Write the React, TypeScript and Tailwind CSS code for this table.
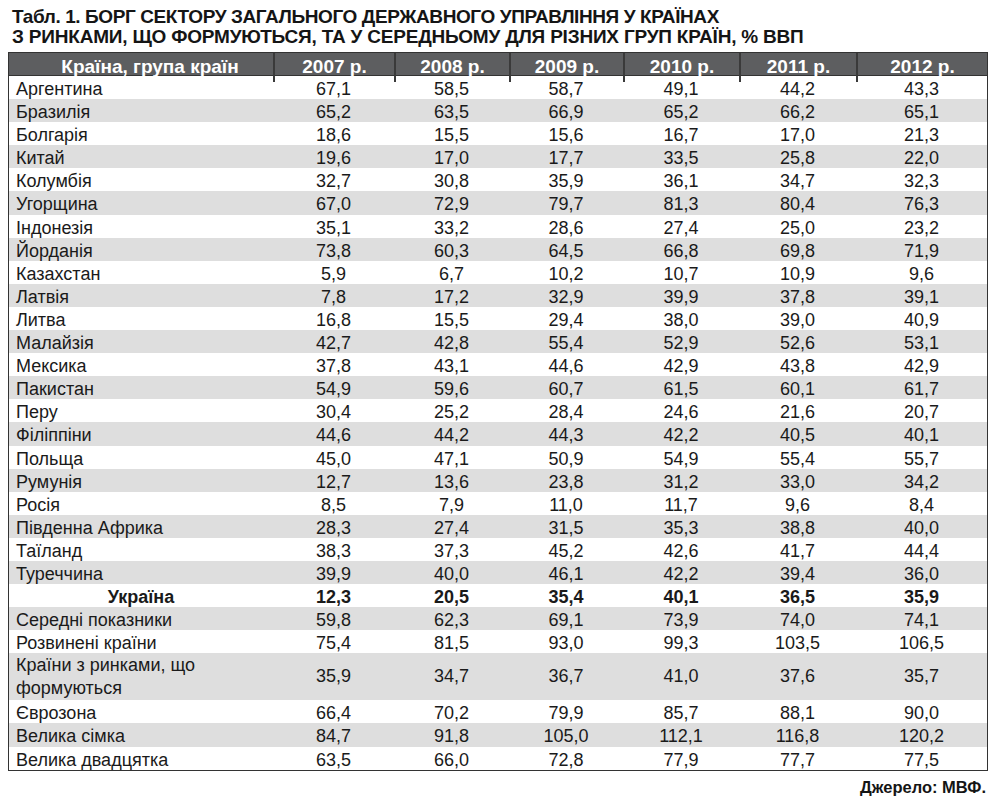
import React from "react";

type Row = { name: string; vals: string[]; bold?: boolean; tall?: boolean };

const rows: Row[] = [
  { name: "Аргентина", vals: ["67,1", "58,5", "58,7", "49,1", "44,2", "43,3"] },
  { name: "Бразилія", vals: ["65,2", "63,5", "66,9", "65,2", "66,2", "65,1"] },
  { name: "Болгарія", vals: ["18,6", "15,5", "15,6", "16,7", "17,0", "21,3"] },
  { name: "Китай", vals: ["19,6", "17,0", "17,7", "33,5", "25,8", "22,0"] },
  { name: "Колумбія", vals: ["32,7", "30,8", "35,9", "36,1", "34,7", "32,3"] },
  { name: "Угорщина", vals: ["67,0", "72,9", "79,7", "81,3", "80,4", "76,3"] },
  { name: "Індонезія", vals: ["35,1", "33,2", "28,6", "27,4", "25,0", "23,2"] },
  { name: "Йорданія", vals: ["73,8", "60,3", "64,5", "66,8", "69,8", "71,9"] },
  { name: "Казахстан", vals: ["5,9", "6,7", "10,2", "10,7", "10,9", "9,6"] },
  { name: "Латвія", vals: ["7,8", "17,2", "32,9", "39,9", "37,8", "39,1"] },
  { name: "Литва", vals: ["16,8", "15,5", "29,4", "38,0", "39,0", "40,9"] },
  { name: "Малайзія", vals: ["42,7", "42,8", "55,4", "52,9", "52,6", "53,1"] },
  { name: "Мексика", vals: ["37,8", "43,1", "44,6", "42,9", "43,8", "42,9"] },
  { name: "Пакистан", vals: ["54,9", "59,6", "60,7", "61,5", "60,1", "61,7"] },
  { name: "Перу", vals: ["30,4", "25,2", "28,4", "24,6", "21,6", "20,7"] },
  { name: "Філіппіни", vals: ["44,6", "44,2", "44,3", "42,2", "40,5", "40,1"] },
  { name: "Польща", vals: ["45,0", "47,1", "50,9", "54,9", "55,4", "55,7"] },
  { name: "Румунія", vals: ["12,7", "13,6", "23,8", "31,2", "33,0", "34,2"] },
  { name: "Росія", vals: ["8,5", "7,9", "11,0", "11,7", "9,6", "8,4"] },
  { name: "Південна Африка", vals: ["28,3", "27,4", "31,5", "35,3", "38,8", "40,0"] },
  { name: "Таїланд", vals: ["38,3", "37,3", "45,2", "42,6", "41,7", "44,4"] },
  { name: "Туреччина", vals: ["39,9", "40,0", "46,1", "42,2", "39,4", "36,0"] },
  { name: "Україна", vals: ["12,3", "20,5", "35,4", "40,1", "36,5", "35,9"], bold: true },
  { name: "Середні показники", vals: ["59,8", "62,3", "69,1", "73,9", "74,0", "74,1"] },
  { name: "Розвинені країни", vals: ["75,4", "81,5", "93,0", "99,3", "103,5", "106,5"] },
  { name: "Країни з ринками, що формуються", vals: ["35,9", "34,7", "36,7", "41,0", "37,6", "35,7"], tall: true },
  { name: "Єврозона", vals: ["66,4", "70,2", "79,9", "85,7", "88,1", "90,0"] },
  { name: "Велика сімка", vals: ["84,7", "91,8", "105,0", "112,1", "116,8", "120,2"] },
  { name: "Велика двадцятка", vals: ["63,5", "66,0", "72,8", "77,9", "77,7", "77,5"] },
];

const years = ["2007 р.", "2008 р.", "2009 р.", "2010 р.", "2011 р.", "2012 р."];
const grid = "grid grid-cols-[264px_121px_115px_114px_116px_117px_1fr]";

export default function App() {
  return (
    <div className="w-[1000px] h-[800px] bg-white text-[#1a1a1a] font-['Liberation_Sans',Arial,sans-serif] relative">
      <div className="pl-[12px] pt-[7px] text-[19px] leading-[20px] font-bold tracking-[-0.2px] text-[#151515]">
        <div className="tracking-[-0.4px]">Табл. 1. БОРГ СЕКТОРУ ЗАГАЛЬНОГО ДЕРЖАВНОГО УПРАВЛІННЯ У КРАЇНАХ</div>
        <div>З РИНКАМИ, ЩО ФОРМУЮТЬСЯ, ТА У СЕРЕДНЬОМУ ДЛЯ РІЗНИХ ГРУП КРАЇН, % ВВП</div>
      </div>
      <div className="ml-[8px] mt-[5px] w-[980px] border border-[#333]">
        <div className={`${grid} h-[23px] bg-[#5d5e60] text-white font-bold text-[19px] border-b border-[#333]`}>
          <div className="flex items-center justify-center pl-[18px]">Країна, група країн</div>
          {years.map((y) => (
            <div key={y} className="flex items-center justify-center border-l-2 border-[#3a3a3a]">
              {y}
            </div>
          ))}
        </div>
        {rows.map((r, i) => (
          <div
            key={r.name}
            className={`${grid} ${r.tall ? "h-[47px]" : "h-[23.1px]"} ${i % 2 === 1 ? "bg-[#dedede]" : "bg-white"} text-[18px] ${r.bold ? "font-bold" : ""}`}
          >
            <div
              className={`flex items-center ${r.bold ? "justify-center" : "pl-[7px] pr-[40px]"} leading-[23px]`}
            >
              {r.name}
            </div>
            {r.vals.map((v, j) => (
              <div key={j} className="flex items-center justify-center">
                {v}
              </div>
            ))}
          </div>
        ))}
      </div>
      <div className="absolute right-[14px] top-[775px] text-[16.5px] font-bold text-[#151515]">Джерело: МВФ.</div>
    </div>
  );
}
